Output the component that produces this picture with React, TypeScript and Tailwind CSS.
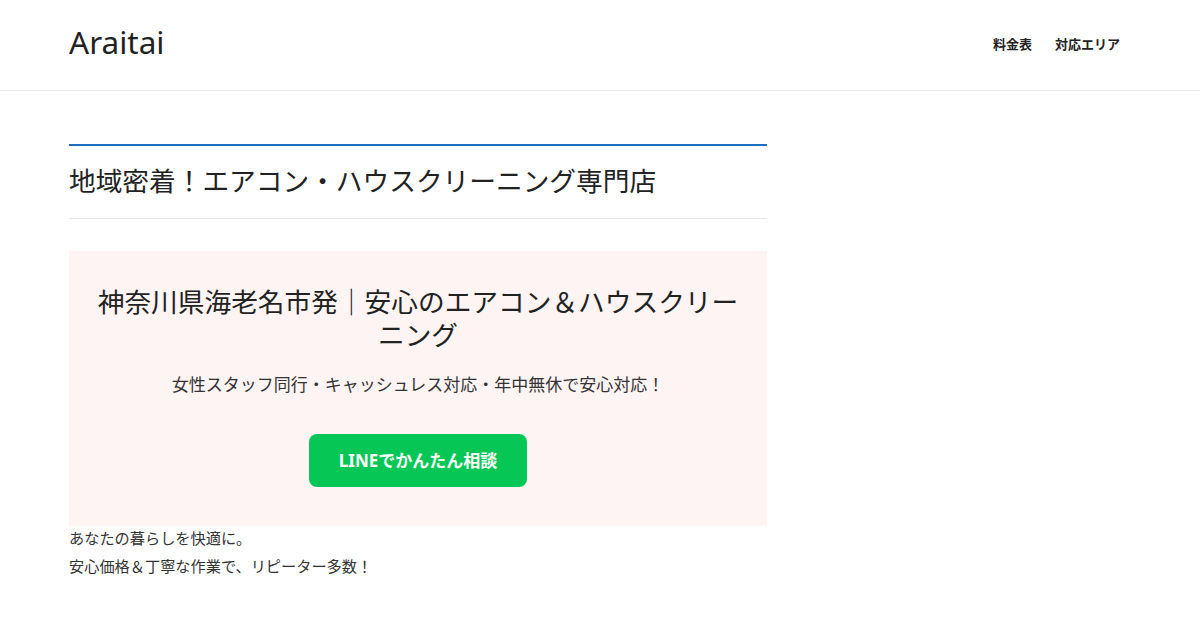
const font = {
	fontFamily: '"Noto Sans", "Noto Sans CJK JP", sans-serif',
};

function Header() {
	return (
		<header className="h-[91px] border-b border-[#ebebeb] bg-white">
			<div className="ml-[69px] flex h-full w-[1051px] items-center justify-between">
				<a className="text-[31.5px] leading-none text-[#222] pb-[6px]">Araitai</a>
				<nav className="flex items-center gap-[23px] text-[13px] font-bold text-[#222]">
					<a>料金表</a>
					<a>対応エリア</a>
				</nav>
			</div>
		</header>
	);
}

function Hero() {
	return (
		<section className="mt-8 bg-[#fef4f4] px-6 pt-[34px] pb-[39px] text-center">
			<h2 className="text-[26.7px] leading-[33px] text-[#222]">
				神奈川県海老名市発｜安心のエアコン＆ハウスクリーニング
			</h2>
			<p className="mt-[21px] text-[17px] leading-[26px] text-[#333]">
				女性スタッフ同行・キャッシュレス対応・年中無休で安心対応！
			</p>
			<a className="mx-auto mt-[36px] flex h-[53px] w-[218px] items-center justify-center rounded-lg bg-[#06c755] text-[17px] font-bold text-white">
				LINEでかんたん相談
			</a>
		</section>
	);
}

export default function App() {
	return (
		<div className="min-h-[620px] bg-white" style={font}>
			<Header />
			<main className="ml-[69px] w-[698px] pt-[53px]">
				<div className="border-t-2 border-[#1e6fc0] border-b border-b-[#e8e8e8] h-[75px] flex items-center">
					<h1 className="text-[26.7px] text-[#222] leading-none pb-[2px]">
						地域密着！エアコン・ハウスクリーニング専門店
					</h1>
				</div>
				<Hero />
				<div className="-mt-[2px] text-[15.2px] leading-[28px] text-[#333]">
					<p>あなたの暮らしを快適に。</p>
					<p>安心価格＆丁寧な作業で、リピーター多数！</p>
				</div>
			</main>
		</div>
	);
}
